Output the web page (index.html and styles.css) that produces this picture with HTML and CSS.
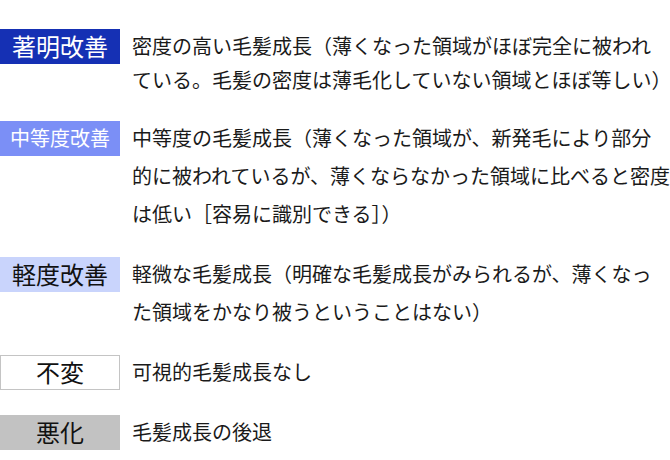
FILE: index.html
```html
<!DOCTYPE html>
<html lang="ja">
<head>
  <meta charset="utf-8">
  <title>改善度の評価基準</title>
  <link rel="stylesheet" href="styles.css">
</head>
<body>
  <div class="grades">
    <div class="grade grade-compact">
      <div class="label label-marked">著明改善</div>
      <p class="desc">密度の高い毛髪成長（薄くなった領域がほぼ完全に被われ<br>ている。毛髪の密度は薄毛化していない領域とほぼ等しい）</p>
    </div>
    <div class="grade">
      <div class="label label-moderate">中等度改善</div>
      <p class="desc">中等度の毛髪成長（薄くなった領域が、新発毛により部分<br>的に被われているが、薄くならなかった領域に比べると密度<br>は低い［容易に識別できる］）</p>
    </div>
    <div class="grade">
      <div class="label label-slight">軽度改善</div>
      <p class="desc">軽微な毛髪成長（明確な毛髪成長がみられるが、薄くなっ<br>た領域をかなり被うということはない）</p>
    </div>
    <div class="grade">
      <div class="label label-none">不変</div>
      <p class="desc">可視的毛髪成長なし</p>
    </div>
    <div class="grade">
      <div class="label label-worse">悪化</div>
      <p class="desc">毛髪成長の後退</p>
    </div>
  </div>
</body>
</html>
```

FILE: styles.css
```css
body {
  margin: 0;
  background: #fff;
  color: #1a1a1a;
  font-family: "Noto Sans CJK JP", "Noto Sans", sans-serif;
  overflow: hidden;
}

.grades {
  display: flex;
  flex-direction: column;
  gap: 22px;
  padding-top: 29px;
}

.grade {
  --lh: 38px;
  display: flex;
  align-items: flex-start;
  gap: 12px;
}

.grade-compact { --lh: 34px; }

.label {
  flex: 0 0 120px;
  height: 35px;
  margin-top: calc((var(--lh) - 35px) / 2);
  box-sizing: border-box;
  display: flex;
  align-items: center;
  justify-content: center;
  font-size: 24px;
  line-height: 1;
}

.label-marked { background: #1530b4; color: #fff; }
.label-moderate { background: #7b8ff6; color: #fff; font-size: 20px; }
.label-slight { background: #c9d4fc; color: #111; }
.label-none { background: #fff; border: 1px solid #c4c4c4; color: #111; }
.label-worse { background: #c2c2c2; color: #111; }

.desc {
  margin: 0;
  white-space: nowrap;
  font-size: 20px;
  line-height: var(--lh);
}
```
